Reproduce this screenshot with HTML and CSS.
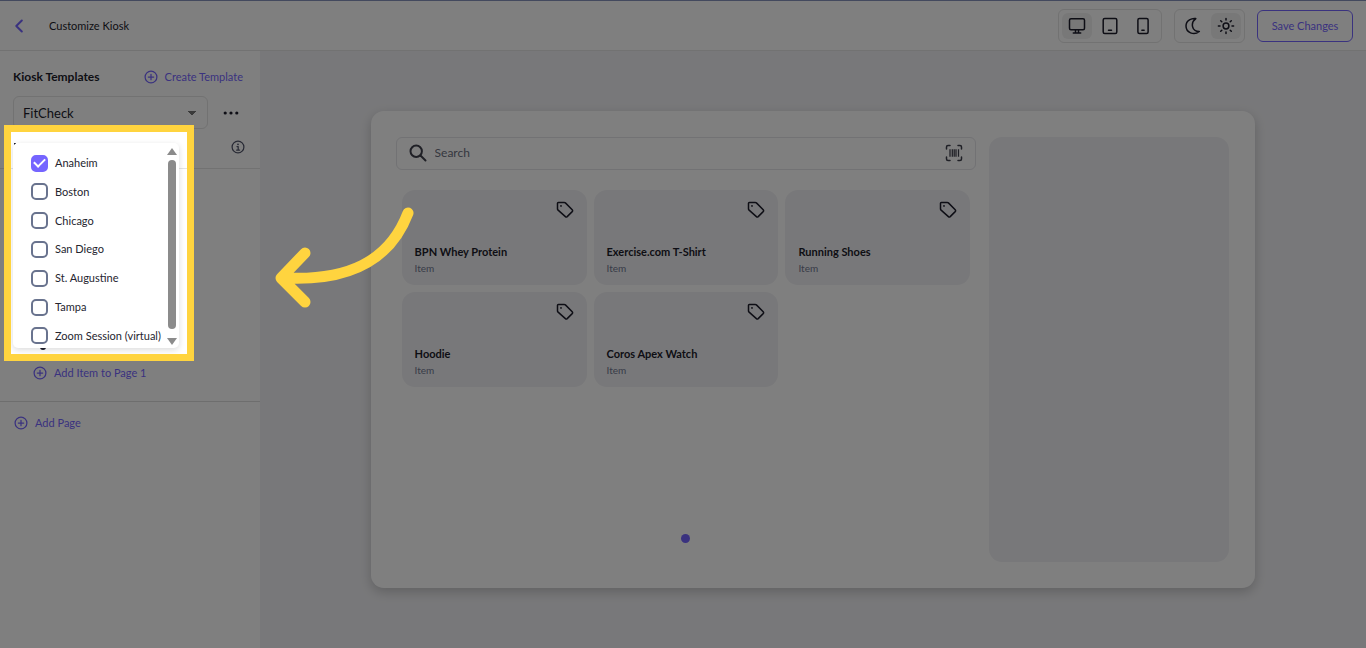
FILE: index.html
```html
<!DOCTYPE html>
<html lang="en">
<head>
<meta charset="utf-8">
<title>Customize Kiosk</title>
<link rel="stylesheet" href="styles.css">
</head>
<body>
<svg class="defs" aria-hidden="true">
  <symbol id="plus" viewBox="0 0 14 14"><circle cx="7" cy="7" r="5.9"/><path d="M7 4.3v5.4M4.3 7h5.4"/></symbol>
  <symbol id="tag" viewBox="0 0 18 18"><path d="M1.500 2.200q0-.8.8-.8h5.900q.7 0 1.200.5l6.800 6.900q.8.9 0 1.800l-5 5q-.9.8-1.800 0L2.100 9.100q-.6-.5-.6-1.200z"/><circle class="fill" cx="5" cy="4.900" r=".9"/></symbol>
</svg>
<div class="app">
  <header class="topbar">
    <button class="back" aria-label="Back"><svg viewBox="0 0 8 14" width="8" height="14"><path d="M6.800 1.500 1.300 7l5.500 5.500"/></svg></button>
    <h1 class="title">Customize Kiosk</h1>
    <div class="group">
      <button class="tool active" aria-label="Desktop"><svg viewBox="0 0 18 18" width="18" height="18"><rect x="1.500" y="1.800" width="15" height="11" rx="1.500"/><path d="M7.500 13v3M10.500 13v3M5.300 16h7.400"/></svg></button>
      <button class="tool" aria-label="Tablet"><svg viewBox="0 0 18 18" width="18" height="18"><rect x="2.200" y="1.500" width="13.600" height="15" rx="1.500"/><path d="M7.500 13.300h3"/></svg></button>
      <button class="tool" aria-label="Phone"><svg viewBox="0 0 18 18" width="18" height="18"><rect x="3.900" y="1.500" width="10.200" height="15" rx="1.500"/><path d="M7.900 13.300h2.200"/></svg></button>
    </div>
    <div class="group">
      <button class="tool" aria-label="Dark theme"><svg viewBox="0 0 18 18" width="18" height="18"><path d="M11.800 1.600C8 .9 2 3.400 2 9c0 6.400 7.700 10 13.300 5.500C7.600 14.400 6.200 5.700 11.800 1.600z"/></svg></button>
      <button class="tool active" aria-label="Light theme"><svg viewBox="0 0 18 18" width="18" height="18"><circle cx="9" cy="9" r="2.900"/><path d="M9 1.400v1.600M9 15v1.600M1.400 9h1.600M15 9h1.600M3.700 3.700l1.100 1.100M13.200 13.200l1.100 1.100M3.700 14.300l1.100-1.100M13.200 4.800l1.100-1.100"/></svg></button>
    </div>
    <button class="save">Save Changes</button>
  </header>
  <div class="workspace">
    <aside class="sidebar">
      <div class="templates-head">
        <h2 class="heading">Kiosk Templates</h2>
        <button class="link"><svg class="plus"><use href="#plus"/></svg>Create Template</button>
      </div>
      <div class="template-row">
        <select class="template-select" aria-label="Template"><option>FitCheck</option></select>
        <button class="more" aria-label="More options"><svg viewBox="0 0 16 4" width="16" height="4"><circle cx="2.200" cy="2" r="1.600"/><circle cx="8" cy="2" r="1.600"/><circle cx="13.800" cy="2" r="1.600"/></svg></button>
      </div>
      <div class="locations">
        <button class="info" aria-label="Information"><svg viewBox="0 0 14 14" width="14" height="14"><circle cx="7" cy="7" r="5.900"/><path d="M6 6.500h1.200V10M5.600 10h3"/><circle class="fill" cx="7" cy="4.300" r=".9"/></svg></button>
        <div class="dropdown">
          <div class="options">
            <label class="option"><input type="checkbox" checked>Anaheim</label>
            <label class="option"><input type="checkbox">Boston</label>
            <label class="option"><input type="checkbox">Chicago</label>
            <label class="option"><input type="checkbox">San Diego</label>
            <label class="option"><input type="checkbox">St. Augustine</label>
            <label class="option"><input type="checkbox">Tampa</label>
            <label class="option"><input type="checkbox">Zoom Session (virtual)</label>
          </div>
          <div class="scrollbar"><i class="up"></i><i class="thumb"></i><i class="down"></i></div>
        </div>
      </div>
      <div class="page-block">
        <button class="link"><svg class="plus"><use href="#plus"/></svg>Add Item to Page 1</button>
      </div>
      <div class="add-page">
        <button class="link"><svg class="plus"><use href="#plus"/></svg>Add Page</button>
      </div>
    </aside>
    <main class="canvas">
      <div class="kiosk">
        <section class="catalog">
          <div class="search">
            <svg viewBox="0 0 18 18" width="18" height="18"><circle cx="7.200" cy="7.200" r="5.700"/><path d="m11.500 11.500 5 5"/></svg>
            <input type="text" placeholder="Search" aria-label="Search">
            <svg class="barcode" viewBox="0 0 18 18" width="18" height="18"><path d="M1.500 5V3q0-1.500 1.500-1.500h2M13 1.500h2q1.500 0 1.500 1.500v2M16.500 13v2q0 1.500-1.500 1.500h-2M5 16.500H3q-1.500 0-1.500-1.500v-2"/><path class="bars" d="M5 5.200v7.600M7.300 5.200v7.600M9.200 5.200v7.600M11 5.200v7.600M13.500 5.200v7.600"/></svg>
          </div>
          <div class="items">
            <article class="item"><svg class="tag"><use href="#tag"/></svg><h3>BPN Whey Protein</h3><p>Item</p></article>
            <article class="item"><svg class="tag"><use href="#tag"/></svg><h3>Exercise.com T-Shirt</h3><p>Item</p></article>
            <article class="item"><svg class="tag"><use href="#tag"/></svg><h3>Running Shoes</h3><p>Item</p></article>
            <article class="item"><svg class="tag"><use href="#tag"/></svg><h3>Hoodie</h3><p>Item</p></article>
            <article class="item"><svg class="tag"><use href="#tag"/></svg><h3>Coros Apex Watch</h3><p>Item</p></article>
          </div>
          <button class="dot" aria-label="Page 1"></button>
        </section>
        <section class="cart"></section>
      </div>
    </main>
  </div>
  <div class="spotlight"></div>
  <svg class="arrow" viewBox="0 0 140 104" width="140" height="104" aria-hidden="true"><path d="M134 9C115 59 72 77 11 74M31 49 7 74l24 24"/></svg>
</div>
</body>
</html>
```

FILE: styles.css
```css
* { box-sizing: border-box; }
body { margin: 0; font-family: Lato, "Liberation Sans", sans-serif; font-size: 11px; line-height: 16px; color: #1c1c2b; }
h1, h2, h3, p { margin: 0; }
button { font: inherit; color: inherit; background: none; border: 0; padding: 0; display: flex; align-items: center; justify-content: center; }
svg { fill: none; stroke: currentColor; stroke-width: 1.5; stroke-linecap: round; stroke-linejoin: round; flex: none; }
.fill { fill: currentColor; stroke: none; }
.defs { display: none; }
.app { position: relative; min-height: 100vh; display: flex; flex-direction: column; overflow: hidden; background: #fff; }

.topbar { display: flex; align-items: center; height: 51px; padding: 0 13px 0 15px; border-top: 1px solid #8793bd; border-bottom: 1px solid #e4e4e4; }
.back { color: #7565ff; }
.back svg { stroke-width: 2; }
.title { font-size: 11px; font-weight: 400; margin-left: 26px; margin-right: auto; }
.group { display: flex; gap: 3px; margin-right: 12px; border: 1px solid #e4e4e4; border-radius: 6px; padding: 3px; height: 34px; }
.tool { width: 30px; height: 26px; border-radius: 6px; }
.tool.active { background: #f1f1f1; }
.save { width: 96px; height: 32px; border: 1px solid #7565ff; border-radius: 6px; color: #7565ff; }

.workspace { flex: 1; display: flex; }
.sidebar { flex: none; width: 260px; }
.link { color: #7565ff; }
.plus { width: 14px; height: 14px; margin-right: 7px; stroke-width: 1.25; }
.templates-head { display: flex; justify-content: space-between; align-items: center; padding: 18px 17px 0 13px; }
.heading { font-size: 12px; font-weight: 700; }
.template-row { display: flex; align-items: center; gap: 15px; padding: 11px 21px 0 13px; }
.template-select { flex: 1; height: 33px; appearance: none; font: inherit; font-size: 13px; color: inherit; padding: 0 9px; border: 1px solid #e4e4e4; border-radius: 6px; background: linear-gradient(to bottom left, #757575 50%, transparent 51%) right 15px center / 4px 4px no-repeat, linear-gradient(to bottom right, #757575 50%, transparent 51%) right 11px center / 4px 4px no-repeat; }
.more svg { fill: currentColor; stroke: none; }
.locations { position: relative; display: flex; justify-content: flex-end; padding: 11px 15px 14px; border-bottom: 1px solid #e4e4e4; }
.locations::before { content: ""; position: absolute; left: 14px; top: 14px; width: 2px; height: 3px; background: #1c1c2b; }
.locations::after { content: ""; position: absolute; left: 40px; top: 215px; width: 6px; height: 6px; border-radius: 50%; background: #1c1c2b; }
.info { color: #52566b; }
.info svg { stroke-width: 1.25; }
.dropdown { position: absolute; z-index: 1; top: 14px; left: 13px; width: 166px; height: 205px; display: flex; justify-content: space-between; background: #fff; border-radius: 5px; box-shadow: 0 2px 6px rgba(0, 0, 0, .14); }
.options { display: flex; flex-direction: column; justify-content: space-between; padding: 10px 0 2px 18px; }
.option { display: flex; align-items: center; gap: 7px; height: 20px; white-space: nowrap; color: #25252f; }
.option input { appearance: none; width: 17px; height: 17px; margin: 0; border: 2px solid #69738e; border-radius: 5px; }
.option input:checked { display: flex; align-items: center; justify-content: center; border-color: #7565ff; background: #7565ff; }
.option input:checked::after { content: ""; width: 9px; height: 5px; margin-bottom: 3px; flex: none; border-left: 2px solid #fff; border-bottom: 2px solid #fff; transform: rotate(-45deg); }
.scrollbar { display: flex; flex-direction: column; align-items: center; width: 14px; padding: 5px 0 3px; }
.scrollbar .up { border: 5px solid transparent; border-top: 0; border-bottom: 7px solid #8b8b8b; }
.scrollbar .thumb { flex: 1; width: 8px; margin: 5px 0 9px; border-radius: 4px; background: #8b8b8b; }
.scrollbar .down { border: 5px solid transparent; border-bottom: 0; border-top: 7px solid #8b8b8b; }
.page-block { padding: 196px 0 20px 33px; border-bottom: 1px solid #dcdcdc; }
.add-page { padding: 13px 14px; }

.canvas { flex: 1; display: flex; align-items: center; justify-content: center; background: #f1f1f4; }
.kiosk { width: 80%; height: 80%; display: flex; gap: 13px; padding: 26px 26px 26px 25px; background: #fff; border-radius: 13px; box-shadow: 0 4px 12px rgba(0, 0, 0, .2); }
.catalog { flex: 1; display: flex; flex-direction: column; }
.search { display: flex; align-items: center; gap: 8px; height: 33px; padding: 0 12px; border: 1px solid #e4e4e8; border-radius: 6px; color: #3f404c; }
.search svg { stroke-width: 2; }
.search .barcode { stroke-width: 1.5; }
.search .bars { stroke-linecap: butt; stroke-width: 1.25; }
.search input { flex: 1; min-width: 0; border: 0; padding: 0; background: none; font: inherit; font-size: 12px; color: inherit; }
.search input::placeholder { color: #6c7080; opacity: 1; }
.items { display: grid; grid-template-columns: repeat(3, 1fr); gap: 7px; padding: 20px 6px 0; }
.item { height: 95px; padding: 11px 13px; background: #f1f1f4; border-radius: 13px; display: flex; flex-direction: column; }
.item h3 { font-size: 11px; font-weight: 700; margin-top: 25px; line-height: 16px; }
.item p { font-size: 10px; line-height: 16px; color: #727890; }
.tag { width: 18px; height: 18px; align-self: flex-end; }
.dot { width: 9px; height: 9px; border-radius: 50%; background: #7565ff; margin: auto auto 19px; }
.cart { flex: none; width: 240px; background: #f1f1f4; border-radius: 13px; }

.spotlight { position: absolute; z-index: 2; left: 4px; top: 125px; width: 190px; height: 236px; border: 7px solid #ffd43f; box-shadow: 0 0 0 2000px rgba(0, 0, 0, .5); pointer-events: none; }
.arrow { position: absolute; z-index: 3; left: 274px; top: 204px; color: #ffd43f; stroke-width: 11; }
```
